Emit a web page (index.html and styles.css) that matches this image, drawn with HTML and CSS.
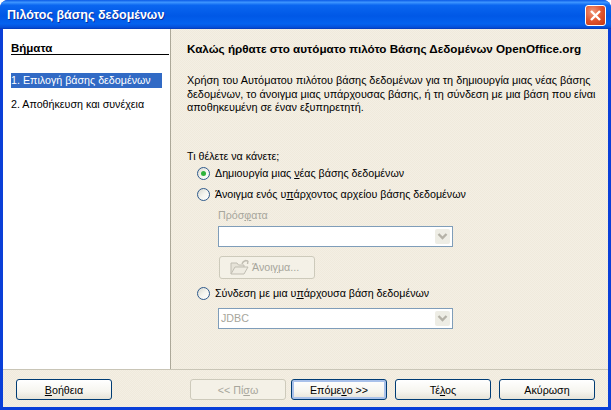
FILE: index.html
```html
<!DOCTYPE html>
<html lang="el">
  <head>
    <meta charset="UTF-8" />
    <title>Πιλότος βάσης δεδομένων</title>
    <link rel="stylesheet" href="styles.css">
  </head>
  <body>
    <div class="window">
      <div class="titlebar">
        <span class="title">Πιλότος βάσης δεδομένων</span>
        <span class="close">
          <svg width="13" height="13" viewBox="0 0 13 13">
            <path d="M2 2 L11 11 M11 2 L2 11" stroke="#fff" stroke-width="2.4" fill="none" />
          </svg>
        </span>
      </div>

      <div class="content">
        <div class="nav">
          <div class="nav-head">Βήματα</div>
          <div class="nav-item selected">1. Επιλογή βάσης δεδομένων</div>
          <div class="nav-item">2. Αποθήκευση και συνέχεια</div>
        </div>

        <div class="main">
          <div class="main-head">Καλώς ήρθατε στο αυτόματο πιλότο Βάσης Δεδομένων OpenOffice.org</div>
          <p class="intro">
            Χρήση του Αυτόματου πιλότου βάσης δεδομένων για τη δημιουργία μιας νέας βάσης<br>
            δεδομένων, το άνοιγμα μιας υπάρχουσας βάσης, ή τη σύνδεση με μια βάση που είναι<br>
            αποθηκευμένη σε έναν εξυπηρετητή.
          </p>
          <div class="question">Τι θέλετε να κάνετε;</div>

          <div class="radio-row first">
            <span class="radio checked"></span>
            <span>Δημιουργία μιας <u>ν</u>έας βάσης δεδομένων</span>
          </div>
          <div class="radio-row second">
            <span class="radio"></span>
            <span>Άνοιγμα ενός υ<u>π</u>άρχοντος αρχείου βάσης δεδομένων</span>
          </div>

          <div class="recent-label">Πρόσ<u>φ</u>ατα</div>
          <div class="combo combo-recent">
            <span class="combo-text"></span>
            <span class="combo-arrow">
              <svg width="11" height="7" viewBox="0 0 11 7">
                <path d="M1.5 1 L5.5 5 L9.5 1" stroke="#b5b2a8" stroke-width="2.4" fill="none" />
              </svg>
            </span>
          </div>

          <div class="btn open-btn disabled">
            <svg width="22" height="17" viewBox="0 0 22 17">
              <path d="M2 15 V4 H8 L9.5 6 H15 V8" fill="#e6e3d8" stroke="#c0bdb2" />
              <path d="M2 15 L6 8 H19 L15 15 Z" fill="#efece2" stroke="#c0bdb2" />
              <path d="M13 5 C14 2 17 1 19 2 M19 2 L18.5 5 M19 2 L16 1.5" stroke="#c0bdb2" fill="none" stroke-width="1.4" />
            </svg>
            <span>Άνοι<u>γ</u>μα...</span>
          </div>

          <div class="radio-row third">
            <span class="radio"></span>
            <span>Σύνδεση με μια υ<u>π</u>άρχουσα βάση δεδομένων</span>
          </div>

          <div class="combo combo-driver">
            <span class="combo-text">JDBC</span>
            <span class="combo-arrow">
              <svg width="11" height="7" viewBox="0 0 11 7">
                <path d="M1.5 1 L5.5 5 L9.5 1" stroke="#b5b2a8" stroke-width="2.4" fill="none" />
              </svg>
            </span>
          </div>
        </div>
      </div>

      <div class="footer">
        <div class="btn"><span><u>Β</u>οήθεια</span></div>
        <div class="footer-right">
          <div class="btn disabled"><span>&lt;&lt; Πί<u>σ</u>ω</span></div>
          <div class="btn default"><span>Επόμε<u>ν</u>ο &gt;&gt;</span></div>
          <div class="btn finish"><span>Τέ<u>λ</u>ος</span></div>
          <div class="btn cancel"><span>Ακύρωση</span></div>
        </div>
      </div>
    </div>
  </body>
</html>
```

FILE: styles.css
```css
html,
body {
  margin: 0;
  padding: 0;
  background: #fff;
  overflow: hidden;
}
.window {
  width: 611px;
  height: 410px;
  box-sizing: border-box;
  display: flex;
  flex-direction: column;
  border-radius: 8px 8px 0 0;
  overflow: hidden;
  background: #0a3fd8;
  padding: 0 3px 3px;
  font-family: "Liberation Sans", Arial, sans-serif;
  font-size: 10.7px;
  color: #000;
}
.titlebar {
  height: 29px;
  margin: 0 -3px;
  padding: 0 5px 0 7px;
  flex: none;
  display: flex;
  align-items: center;
  justify-content: space-between;
  background: linear-gradient(180deg, #0a5ae6 0%, #3d95ff 8%, #0a66f0 18%, #0058e6 55%, #0462ef 82%, #0550da 94%, #0338b8 100%);
}
.title {
  color: #fff;
  font-weight: bold;
  font-size: 12.5px;
  text-shadow: 1px 1px 0 #0a2f9c;
}
.close {
  width: 19px;
  height: 19px;
  margin-top: 1px;
  border: 1px solid #fff;
  border-radius: 3px;
  display: flex;
  align-items: center;
  justify-content: center;
  background: radial-gradient(circle at 35% 30%, #f0997c 0%, #e0552f 50%, #c53513 100%);
}
.content {
  display: flex;
  flex: 1;
  min-height: 0;
  border-bottom: 1px solid #c9c5b6;
}
.nav {
  width: 151px;
  flex: none;
  background: #fff;
  border-right: 1px solid #aca899;
  padding: 0 8px;
}
.nav-head {
  margin-top: 12px;
  height: 13px;
  line-height: 15px;
  width: 158px;
  font-size: 11.5px;
  font-weight: bold;
  border-bottom: 1px solid #000;
}
.nav-item {
  height: 15px;
  line-height: 15px;
  white-space: nowrap;
}
.nav-item.selected {
  margin-top: 18px;
  background: #316ac5;
  color: #fff;
}
.nav-item + .nav-item {
  margin-top: 9px;
}
.main {
  flex: 1;
  padding: 0 0 0 16px;
  background-color: #f1ebdd;
  background-image: conic-gradient(#f4efe4 25%, #f0eadc 0 50%, #f4efe4 0 75%, #f0eadc 0);
  background-size: 2px 2px;
  white-space: nowrap;
}
.main-head {
  margin-top: 13px;
  line-height: 13px;
  font-size: 11.7px;
  font-weight: bold;
}
.intro {
  margin: 19px 0 0;
  line-height: 13.5px;
  font-size: 10.85px;
}
.question {
  margin-top: 35px;
  line-height: 13px;
}
.radio-row {
  display: flex;
  align-items: center;
  gap: 5px;
  margin-left: 10px;
  height: 15px;
}
.radio-row.first {
  margin-top: 3px;
}
.radio-row.second {
  margin-top: 6px;
}
.radio-row.third {
  margin-top: 7px;
}
.radio {
  width: 11px;
  height: 11px;
  flex: none;
  border: 1px solid #2f5a8c;
  border-radius: 50%;
  background: linear-gradient(135deg, #d8d8d0 0%, #f4f4ee 50%, #fff 100%);
  display: flex;
  align-items: center;
  justify-content: center;
}
.radio.checked::after {
  content: "";
  width: 5px;
  height: 5px;
  border-radius: 50%;
  background: #2fb33c;
}
.recent-label {
  margin-top: 7px;
  margin-left: 31px;
  line-height: 13px;
  color: #a7a69c;
}
.combo {
  width: 233px;
  height: 19px;
  margin-left: 31px;
  border: 1px solid #7f9db9;
  background: #fff;
  display: flex;
  align-items: center;
  justify-content: space-between;
  color: #a7a69c;
}
.combo-recent {
  margin-top: 4px;
}
.combo-driver {
  margin-top: 7px;
}
.combo-text {
  padding-left: 2px;
}
.combo-arrow {
  width: 15px;
  height: 15px;
  margin-right: 2px;
  border-radius: 2px;
  background: #eeede5;
  display: flex;
  align-items: center;
  justify-content: center;
}
.btn {
  width: 94px;
  height: 19px;
  border: 1px solid #003c74;
  border-radius: 3px;
  background: linear-gradient(180deg, #fff 0%, #f6f5ef 60%, #e6e3d8 100%);
  display: flex;
  align-items: center;
  justify-content: center;
}
.btn.disabled {
  border-color: #cdcabb;
  background: #f4f1e7;
  color: #a7a69c;
}
.btn.default {
  box-shadow: inset 0 0 0 2px #a9c1ea;
}
.open-btn {
  height: 21px;
  margin: 9px 0 0 32px;
  justify-content: flex-start;
  gap: 1px;
}
.open-btn svg {
  margin-left: 9px;
}
.footer {
  height: 37px;
  flex: none;
  display: flex;
  justify-content: space-between;
  align-items: flex-start;
  padding: 9px 13px 0;
  box-sizing: border-box;
  background-color: #f1ebdd;
  background-image: conic-gradient(#f4efe4 25%, #f0eadc 0 50%, #f4efe4 0 75%, #f0eadc 0);
  background-size: 2px 2px;
}
.footer-right {
  display: flex;
  gap: 5px;
}
.btn.finish,
.btn.cancel {
  margin-left: 3px;
}
```
